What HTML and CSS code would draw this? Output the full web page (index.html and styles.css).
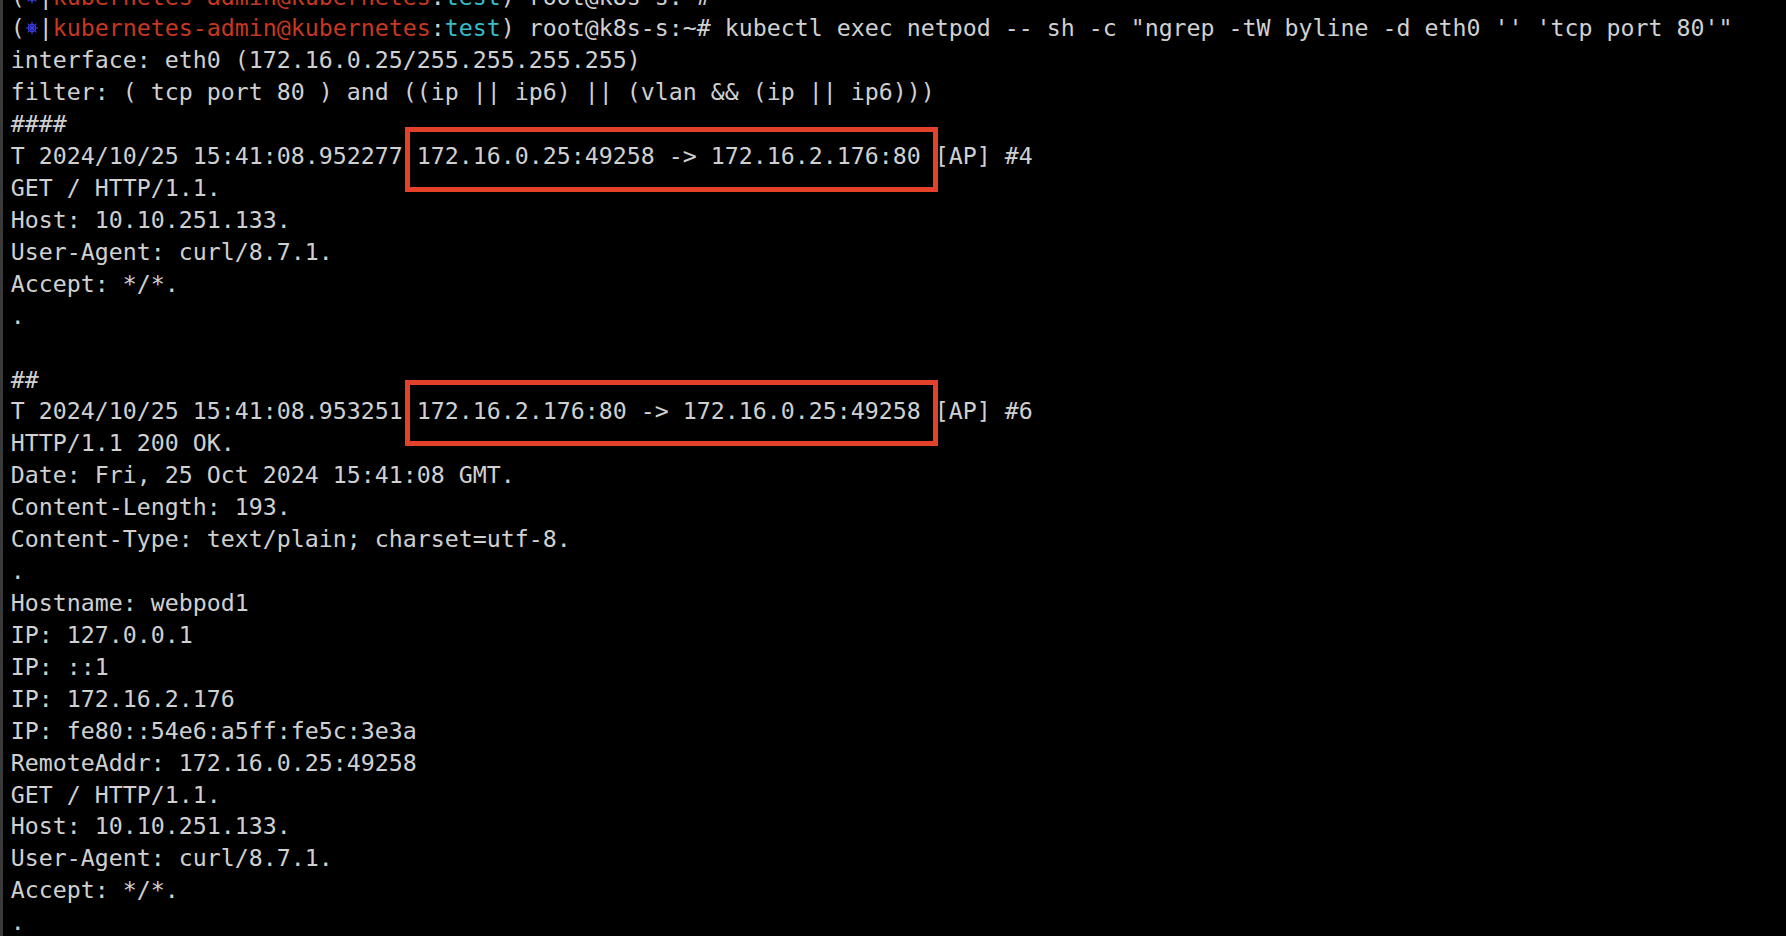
FILE: index.html
```html
<!DOCTYPE html>
<html lang="en">
<head>
<meta charset="utf-8">
<title>Terminal - ngrep</title>
<link rel="stylesheet" href="styles.css">
</head>
<body>
<main class="term">
<pre class="screen">(<svg class="helm" viewBox="0 0 14 14" aria-hidden="true"><g stroke="currentColor" stroke-width="1.2" fill="none"><circle cx="7" cy="7" r="3.6"/><path d="M7 0.8V13.2M0.8 7H13.2M2.6 2.6L11.4 11.4M11.4 2.6L2.6 11.4"/></g><circle cx="7" cy="7" r="1.3" fill="currentColor"/></svg>|<span class="red">kubernetes-admin@kubernetes</span>:<span class="cyan">test</span>) root@k8s-s:~#
(<svg class="helm" viewBox="0 0 14 14" aria-hidden="true"><g stroke="currentColor" stroke-width="1.2" fill="none"><circle cx="7" cy="7" r="3.6"/><path d="M7 0.8V13.2M0.8 7H13.2M2.6 2.6L11.4 11.4M11.4 2.6L2.6 11.4"/></g><circle cx="7" cy="7" r="1.3" fill="currentColor"/></svg>|<span class="red">kubernetes-admin@kubernetes</span>:<span class="cyan">test</span>) root@k8s-s:~# kubectl exec netpod -- sh -c "ngrep -tW byline -d eth0 '' 'tcp port 80'"
interface: eth0 (172.16.0.25/255.255.255.255)
filter: ( tcp port 80 ) and ((ip || ip6) || (vlan &amp;&amp; (ip || ip6)))
####
T 2024/10/25 15:41:08.952277 <span class="hl hl-a">172.16.0.25:49258 -&gt; 172.16.2.176:80</span> [AP] #4
GET / HTTP/1.1.
Host: 10.10.251.133.
User-Agent: curl/8.7.1.
Accept: */*.
.

##
T 2024/10/25 15:41:08.953251 <span class="hl hl-b">172.16.2.176:80 -&gt; 172.16.0.25:49258</span> [AP] #6
HTTP/1.1 200 OK.
Date: Fri, 25 Oct 2024 15:41:08 GMT.
Content-Length: 193.
Content-Type: text/plain; charset=utf-8.
.
Hostname: webpod1
IP: 127.0.0.1
IP: ::1
IP: 172.16.2.176
IP: fe80::54e6:a5ff:fe5c:3e3a
RemoteAddr: 172.16.0.25:49258
GET / HTTP/1.1.
Host: 10.10.251.133.
User-Agent: curl/8.7.1.
Accept: */*.
.
</pre>
</main>
</body>
</html>
```

FILE: styles.css
```css
html, body {
  margin: 0;
  padding: 0;
  background: #000000;
  height: 100%;
  overflow: hidden;
}

.term {
  height: 100vh;
  box-sizing: border-box;
  border-left: 3px solid #3a3a3a;
  padding-left: 7.8px;
  overflow: hidden;
}

.screen {
  margin: -19.5px 0 0 0;
  font-family: "DejaVu Sans Mono", "Liberation Mono", monospace;
  font-size: 23.25px;
  line-height: 31.92px;
  color: #d0d0d0;
  white-space: pre;
}

.red {
  color: #c8371f;
}

.cyan {
  color: #36bdc9;
}

.helm {
  display: inline-block;
  width: 14px;
  height: 14px;
  vertical-align: 1px;
  color: #3a3de2;
}

.hl {
  display: inline-block;
  position: relative;
}

.hl::after {
  content: "";
  position: absolute;
  left: -11.8px;
  right: -17.2px;
  border: 5px solid #e4412a;
}

.hl-a::after {
  top: -13px;
  bottom: -20px;
}

.hl-b::after {
  top: -15.5px;
  bottom: -18.5px;
}
```
